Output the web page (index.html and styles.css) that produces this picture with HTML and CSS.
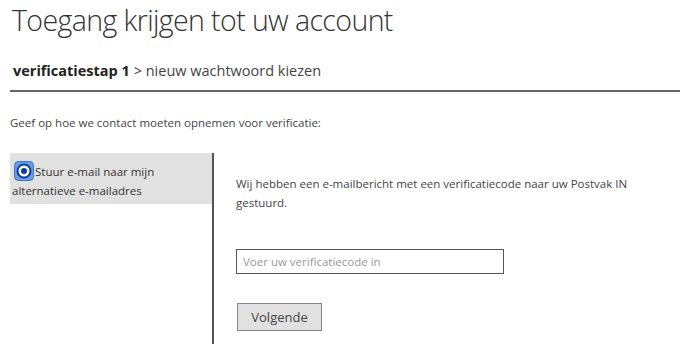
FILE: index.html
```html
<!DOCTYPE html>
<html lang="nl">
<head>
  <meta charset="UTF-8" />
  <title>Toegang krijgen tot uw account</title>
  <link rel="stylesheet" href="styles.css">
</head>
<body>
  <h1 class="title">Toegang krijgen tot uw account</h1>

  <div class="steps">
    <b>verificatiestap 1</b> &gt; nieuw wachtwoord kiezen
  </div>

  <p class="intro">Geef op hoe we contact moeten opnemen voor verificatie:</p>

  <div class="verify">
    <div class="options">
      <label class="option">
        <span class="radio">
          <svg width="20" height="20" viewBox="0 0 20 20">
            <rect x="0.5" y="0.5" width="19" height="19" rx="4" fill="#6a9be0" stroke="#3d74c9"/>
            <circle cx="10" cy="10" r="6.5" fill="#fff" stroke="#0a3f9e" stroke-width="2"/>
            <circle cx="10" cy="10" r="3" fill="#0a3f9e"/>
          </svg>
        </span>Stuur e-mail naar mijn alternatieve e-mailadres
      </label>
    </div>

    <div class="pane">
      <p class="message">Wij hebben een e-mailbericht met een verificatiecode naar uw Postvak IN gestuurd.</p>
      <input class="code" type="text" placeholder="Voer uw verificatiecode in">
      <button class="next">Volgende</button>
    </div>
  </div>
</body>
</html>
```

FILE: styles.css
```css
body {
  margin: 0;
  padding: 0 10px;
  font-family: "Open Sans", sans-serif;
  color: #333;
  background: #fff;
  overflow: hidden;
}

.title {
  margin: 0;
  padding: 0 0 0 2px;
  font-size: 28.5px;
  font-weight: 300;
  line-height: 40px;
  color: #333;
  letter-spacing: -0.6px;
}

.steps {
  margin-top: 21px;
  padding: 0 0 9px 3px;
  font-size: 14.5px;
  line-height: 20px;
  color: #444;
  border-bottom: 2px solid #666;
}

.steps b {
  font-weight: 700;
  color: #222;
}

.intro {
  margin: 23px 0 0;
  font-size: 11.5px;
  line-height: 16px;
  color: #444;
}

.verify {
  display: flex;
  margin-top: 22px;
  height: 200px;
}

.options {
  width: 202px;
  border-right: 2px solid #555;
}

.option {
  display: block;
  background: #e1e1e1;
  padding: 8px 2px 4px 2px;
  font-size: 11.5px;
  line-height: 19px;
  color: #333;
}

.radio {
  display: inline-block;
  vertical-align: -5px;
  margin-right: 1px;
  margin-left: 2px;
}

.radio svg {
  display: block;
}

.pane {
  display: flex;
  flex-direction: column;
  align-items: flex-start;
  padding: 21px 0 0 22px;
}

.message {
  margin: 0;
  width: 430px;
  font-size: 11.5px;
  line-height: 19px;
  color: #444;
}

.code {
  margin-top: 37px;
  width: 268px;
  height: 25px;
  box-sizing: border-box;
  padding: 0 6px;
  border: 1.5px solid #555;
  font-family: "Open Sans", sans-serif;
  font-size: 11.5px;
  color: #333;
}

.code::placeholder {
  color: #999;
}

.next {
  margin-top: 29px;
  margin-left: 1px;
  width: 85px;
  height: 28px;
  background: #e1e1e1;
  border: 1.5px solid #888;
  font-family: "Open Sans", sans-serif;
  font-size: 13px;
  color: #444;
}
```
